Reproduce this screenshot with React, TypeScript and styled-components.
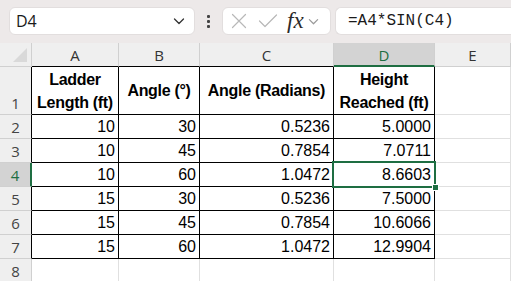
import React from "react";
import styled, { createGlobalStyle } from "styled-components";

const GREEN = "#1e6e42";
const GRID = "#e0e0e0";
const HDR_LINE = "#d0d0d0";

const Global = createGlobalStyle`
  html, body { margin: 0; padding: 0; background: #ffffff; }
  body { width: 511px; height: 281px; overflow: hidden; font-family: "Liberation Sans", Arial, sans-serif; }
  * { box-sizing: border-box; }
`;

const Page = styled.div`
  width: 511px;
  height: 281px;
  overflow: hidden;
  display: flex;
  flex-direction: column;
`;

const Toolbar = styled.div`
  height: 43px;
  flex: none;
  background: #ede9e9;
  display: flex;
  align-items: center;
  padding: 0 0 1px 9px;
`;

const NameBox = styled.div`
  width: 186px;
  height: 28px;
  background: #ffffff;
  border-radius: 6px;
  border: 1px solid #e2dede;
  display: flex;
  align-items: center;
  justify-content: space-between;
  padding: 0 9px 0 6px;
  font-family: "Open Sans", "Noto Sans", sans-serif;
  font-size: 16px;
  color: #1a1a1a;
`;

const Dots = styled.div`
  width: 27px;
  display: flex;
  flex-direction: column;
  align-items: center;
  gap: 2px;
  & > span {
    width: 3px;
    height: 3px;
    background: #444;
    border-radius: 1px;
  }
`;

const FxBox = styled.div`
  width: 109px;
  height: 28px;
  background: #ffffff;
  border-radius: 6px;
  border: 1px solid #e2dede;
  display: flex;
  align-items: center;
  padding: 0 6px 0 8px;
  gap: 11px;
`;

const FxText = styled.span`
  font-family: "Liberation Serif", "DejaVu Serif", serif;
  font-style: italic;
  font-size: 23px;
  color: #2a2a2a;
  line-height: 1;
  margin-left: -2px;
  margin-right: -7px;
  margin-top: -2px;
`;

const FormulaBox = styled.div`
  flex: 1;
  margin-left: 4px;
  height: 28px;
  background: #ffffff;
  border-radius: 6px 0 0 6px;
  border: 1px solid #e2dede;
  border-right: none;
  display: flex;
  align-items: center;
  padding-left: 12px;
  font-family: "Liberation Mono", "DejaVu Sans Mono", monospace;
  font-size: 16px;
  color: #1a1a1a;
`;

const Sheet = styled.div`
  display: grid;
  grid-template-columns: 32px 87px 81px 134px 101px 1fr;
  grid-template-rows: 24px 48px repeat(8, 24px);
`;

const Corner = styled.div`
  background: #efefef;
  border-right: 1px solid ${HDR_LINE};
  border-bottom: 1px solid ${HDR_LINE};
  display: flex;
  align-items: flex-end;
  justify-content: flex-end;
  padding: 0 4px 4px 0;
`;

const ColHead = styled.div<{ $sel?: boolean; $bottom: string }>`
  background: ${(p) => (p.$sel ? "#d3d3d3" : "#efefef")};
  color: ${(p) => (p.$sel ? GREEN : "#333")};
  border-right: 1px solid ${HDR_LINE};
  border-bottom: ${(p) => (p.$sel ? `2px solid ${GREEN}` : `1px solid ${p.$bottom}`)};
  display: flex;
  align-items: center;
  justify-content: center;
  font-family: "Open Sans", "Noto Sans", sans-serif;
  font-size: 15px;
  padding-top: ${(p) => (p.$sel ? "1px" : "0")};
`;

const RowHead = styled.div<{ $sel?: boolean; $right: string }>`
  background: ${(p) => (p.$sel ? "#d3d3d3" : "#efefef")};
  color: ${(p) => (p.$sel ? GREEN : "#444")};
  border-right: ${(p) => (p.$sel ? `2px solid ${GREEN}` : `1px solid ${p.$right}`)};
  border-bottom: 1px solid ${HDR_LINE};
  display: flex;
  align-items: flex-end;
  justify-content: center;
  padding-bottom: 1px;
  font-family: "Open Sans", "Noto Sans", sans-serif;
  font-size: 15px;
`;

const Cell = styled.div<{ $right: string; $bottom: string; $head?: boolean; $sel?: boolean }>`
  position: relative;
  border-right: 1px solid ${(p) => p.$right};
  border-bottom: 1px solid ${(p) => p.$bottom};
  display: flex;
  align-items: ${(p) => (p.$head ? "center" : "flex-end")};
  justify-content: ${(p) => (p.$head ? "center" : "flex-end")};
  text-align: ${(p) => (p.$head ? "center" : "right")};
  padding: ${(p) => (p.$head ? "0 1px" : "0 3px 1px 0")};
  font-family: "Liberation Sans", Arial, sans-serif;
  font-size: 16px;
  font-weight: ${(p) => (p.$head ? 700 : 400)};
  line-height: ${(p) => (p.$head ? "23px" : "20px")};
  color: #000;
  z-index: ${(p) => (p.$sel ? 2 : 0)};
  letter-spacing: ${(p) => (p.$head ? "-0.3px" : "0")};
  white-space: nowrap;
`;

const SelFrame = styled.div`
  position: absolute;
  top: -2px;
  left: -2px;
  right: -2px;
  bottom: -2px;
  border: 2px solid ${GREEN};
  pointer-events: none;
`;

const FillHandle = styled.div`
  position: absolute;
  right: -5px;
  bottom: -5px;
  width: 7px;
  height: 7px;
  background: ${GREEN};
  border: 1px solid #fff;
`;

const Chevron = ({ color = "#333", size = 12 }: { color?: string; size?: number }) => (
  <svg width={size} height={size} viewBox="0 0 12 12">
    <path d="M1.5 4 L6 8.5 L10.5 4" fill="none" stroke={color} strokeWidth="1.3" strokeLinecap="round" strokeLinejoin="round" />
  </svg>
);

const XIcon = () => (
  <svg width="16" height="16" viewBox="0 0 16 16">
    <path d="M1.5 1.5 L14.5 14.5 M14.5 1.5 L1.5 14.5" stroke="#b8b8b8" strokeWidth="1.2" strokeLinecap="round" />
  </svg>
);

const CheckIcon = () => (
  <svg width="20" height="16" viewBox="0 0 20 16">
    <path d="M1.5 8 L7 13.5 L18.5 2" fill="none" stroke="#b8b8b8" strokeWidth="1.2" strokeLinecap="round" strokeLinejoin="round" />
  </svg>
);

const CornerTri = styled.div`
  width: 0;
  height: 0;
  border-left: 14px solid transparent;
  border-bottom: 14px solid #d9d9d9;
`;

type Row = { vals: string[]; head?: boolean };

const rows: Row[] = [
  { vals: ["Ladder Length (ft)", "Angle (°)", "Angle (Radians)", "Height Reached (ft)"], head: true },
  { vals: ["10", "30", "0.5236", "5.0000"] },
  { vals: ["10", "45", "0.7854", "7.0711"] },
  { vals: ["10", "60", "1.0472", "8.6603"] },
  { vals: ["15", "30", "0.5236", "7.5000"] },
  { vals: ["15", "45", "0.7854", "10.6066"] },
  { vals: ["15", "60", "1.0472", "12.9904"] },
];

const headLines: Record<string, React.ReactNode> = {
  "Ladder Length (ft)": (<>Ladder<br />Length (ft)</>),
  "Height Reached (ft)": (<>Height<br />Reached (ft)</>),
};

export default function App() {
  const cols = ["A", "B", "C", "D", "E"];
  return (
    <Page>
      <Global />
      <Toolbar>
        <NameBox>
          <span>D4</span>
          <Chevron />
        </NameBox>
        <Dots>
          <span />
          <span />
          <span />
        </Dots>
        <FxBox>
          <XIcon />
          <CheckIcon />
          <FxText>fx</FxText>
          <Chevron color="#9a9a9a" size={11} />
        </FxBox>
        <FormulaBox>=A4*SIN(C4)</FormulaBox>
      </Toolbar>
      <Sheet>
        <Corner>
          <CornerTri />
        </Corner>
        {cols.map((c, i) => (
          <ColHead key={c} $sel={c === "D"} $bottom={i < 4 ? "#000" : HDR_LINE}>
            {c}
          </ColHead>
        ))}
        {Array.from({ length: 8 }).map((_, r) => {
          const row = rows[r];
          const inTable = !!row;
          return (
            <React.Fragment key={r}>
              <RowHead $sel={r === 3} $right={inTable ? "#000" : HDR_LINE}>
                {r + 1}
              </RowHead>
              {[0, 1, 2, 3].map((ci) => {
                const sel = r === 3 && ci === 3;
                return (
                  <Cell
                    key={ci}
                    $right={inTable ? "#000" : GRID}
                    $bottom={inTable ? "#000" : GRID}
                    $head={row?.head}
                    $sel={sel}
                  >
                    {row ? (row.head ? headLines[row.vals[ci]] ?? row.vals[ci] : row.vals[ci]) : ""}
                    {sel && (
                      <SelFrame>
                        <FillHandle />
                      </SelFrame>
                    )}
                  </Cell>
                );
              })}
              <Cell $right={GRID} $bottom={GRID} />
            </React.Fragment>
          );
        })}
      </Sheet>
    </Page>
  );
}
